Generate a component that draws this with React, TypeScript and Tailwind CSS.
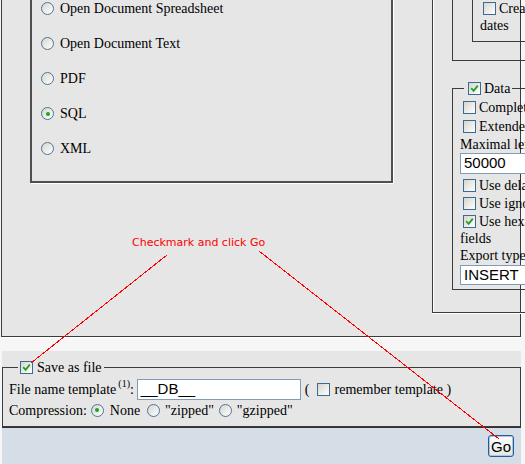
import React from "react";

function Check({ on = false }: { on?: boolean }) {
  return (
    <span className="inline-flex h-[13px] w-[13px] shrink-0 items-center justify-center border border-[#3b6a93] bg-linear-to-br from-[#d6d6d0] to-white">
      {on && (
        <svg viewBox="0 0 9 9" className="h-[9px] w-[9px]">
          <path d="M1.2 4.2 L3.6 6.8 L7.8 1.6" fill="none" stroke="#21a121" strokeWidth="1.8" />
        </svg>
      )}
    </span>
  );
}

function Radio({ on = false }: { on?: boolean }) {
  return (
    <span className="inline-flex h-[13px] w-[13px] shrink-0 items-center justify-center rounded-full border border-[#4f7497] bg-linear-to-br from-[#d6d6d0] to-white">
      {on && <span className="h-[4px] w-[4px] rounded-full bg-[#21a121]" />}
    </span>
  );
}

const formats = ["Open Document Spreadsheet", "Open Document Text", "PDF", "SQL", "XML"];

export default function App() {
  return (
    <div className="relative h-[464px] w-[525px] overflow-hidden bg-[#f6f6f6] font-['Liberation_Serif','Times_New_Roman',serif] text-[14px] text-black">
      {/* export options panel */}
      <div className="ml-[1px] flex h-[337px] w-[520px] items-start border-x border-b border-[#3c3c3c] bg-[#e6e6e6] shadow-[0_1px_0_#fff]">
        <div className="-mt-[30px] ml-[28px] w-[363px] shrink-0 border-2 border-[#4f4f4f] pt-[19px] pb-[15px] shadow-[1px_1px_0_#fff]">
          {formats.map((f) => (
            <div key={f} className="flex h-[35px] items-center">
              <span className="ml-[9px] mr-[6px] flex">
                <Radio on={f === "SQL"} />
              </span>
              {f}
            </div>
          ))}
        </div>

        <div className="ml-[39px] h-[313px] w-[120px] shrink-0 border-b border-l border-[#3c3c3c] pl-[19px] shadow-[inset_1px_0_0_#fff,0_1px_0_#fff]">
          <div className="border-b border-l border-[#3c3c3c] pb-[18px] pl-[19px]">
            <div className="border-b border-l border-[#3c3c3c] pb-[7px] pl-[7px] leading-[17px] whitespace-nowrap">
              <div className="flex h-[17px] items-center">
                <span className="ml-[3px] mr-[3px] flex">
                  <Check />
                </span>
                Creation/Update/Check
              </div>
              <div className="h-[17px]">dates</div>
            </div>
          </div>

          <fieldset className="mt-[18px] border border-[#3c3c3c] pb-[4px] pl-[7px] whitespace-nowrap">
            <legend className="ml-[4px] px-[2px]">
              <span className="flex h-[18px] items-center">
                <span className="mr-[3px] ml-[2px] flex">
                  <Check on />
                </span>
                Data
              </span>
            </legend>
            <div className="mt-[1px] flex h-[19px] items-center">
              <span className="ml-[3px] mr-[3px] flex">
                <Check />
              </span>
              Complete inserts
            </div>
            <div className="flex h-[19px] items-center">
              <span className="ml-[3px] mr-[3px] flex">
                <Check />
              </span>
              Extended inserts
            </div>
            <div className="flex h-[17px] items-center">Maximal length of created query</div>
            <div className="flex h-[21px] w-[160px] items-center border border-[#7f9db9] bg-white pl-[3px] font-['Liberation_Sans',Arial,sans-serif] text-[15px]">
              50000
            </div>
            <div className="mt-[2px] flex h-[18px] items-center">
              <span className="ml-[3px] mr-[3px] flex">
                <Check />
              </span>
              Use delayed inserts
            </div>
            <div className="flex h-[18px] items-center">
              <span className="ml-[3px] mr-[3px] flex">
                <Check />
              </span>
              Use ignore inserts
            </div>
            <div className="flex h-[18px] items-center">
              <span className="ml-[3px] mr-[3px] flex">
                <Check on />
              </span>
              Use hexadecimal for binary
            </div>
            <div className="flex h-[17px] items-center">fields</div>
            <div className="flex h-[17px] items-center">Export type</div>
            <div className="mt-[1px] flex h-[20px] w-[160px] items-center border border-[#7f9db9] bg-white pl-[3px] font-['Liberation_Sans',Arial,sans-serif] text-[15px]">
              INSERT
            </div>
          </fieldset>
        </div>
      </div>

      {/* save as file */}
      <div className="ml-[2px] mt-[14px] w-[519px] bg-[#e6e6e6] pt-[7px]">
        <fieldset className="border border-[#3c3c3c] pb-[7px] pl-[6px] whitespace-nowrap">
          <legend className="ml-[9px] px-[2px]">
            <span className="flex h-[18px] items-center">
              <span className="mr-[4px] flex">
                <Check on />
              </span>
              Save as file
            </span>
          </legend>
          <div className="mt-[2px] flex h-[22px] items-center">
            File name template
            <sup className="ml-[2px] text-[10px]">(1)</sup>:
            <span className="ml-[3px] flex h-[21px] w-[164px] items-center border border-[#7f9db9] bg-white pl-[3px] font-['Liberation_Sans',Arial,sans-serif] text-[15px]">
              __DB__
            </span>
            <span className="ml-[4px]">(</span>
            <span className="ml-[7px] mr-[5px] flex">
              <Check />
            </span>
            remember template )
          </div>
          <div className="mt-[1px] flex h-[18px] items-center">
            Compression:
            <span className="ml-[4px] mr-[6px] flex">
              <Radio on />
            </span>
            None
            <span className="ml-[7px] mr-[5px] flex">
              <Radio />
            </span>
            "zipped"
            <span className="ml-[5px] mr-[5px] flex">
              <Radio />
            </span>
            "gzipped"
          </div>
        </fieldset>
        <div className="flex h-[40px] justify-end border-t border-[#303030] bg-[#d5dde6] pt-[7px] pr-[7px]">
          <button className="h-[22px] w-[26px] rounded-[3px] border border-[#2a5a8f] bg-linear-to-b from-white to-[#e6e6e0] font-['Liberation_Sans',Arial,sans-serif] text-[15px] leading-none shadow-[inset_0_0_0_1px_#a9c6ec]">
            Go
          </button>
        </div>
      </div>

      {/* annotation */}
      <div className="absolute left-[132px] top-[236px] font-['DejaVu_Sans',Verdana,sans-serif] text-[11px] leading-[13px] text-[#ff0000]">
        Checkmark and click Go
      </div>
      <svg className="pointer-events-none absolute inset-0" width="525" height="464">
        <line x1="167" y1="255" x2="31" y2="363" stroke="#ff0000" strokeWidth="1" shapeRendering="crispEdges" />
        <line x1="259" y1="251" x2="499" y2="439" stroke="#ff0000" strokeWidth="1" shapeRendering="crispEdges" />
      </svg>
    </div>
  );
}
